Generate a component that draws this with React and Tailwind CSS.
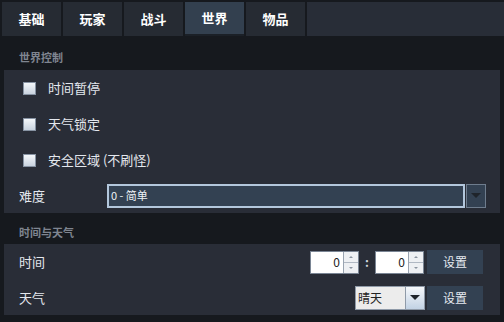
import { useState } from "react";

const tabs = ["基础", "玩家", "战斗", "世界", "物品"];

function Check({ label }) {
    const [on, setOn] = useState(false);
    return (
        <label className="h-9 flex items-center gap-3 pl-[19px] cursor-pointer">
            <span
                onClick={() => setOn(!on)}
                className="w-[13px] h-[13px] border border-[#8793a3] bg-linear-to-b from-[#f4f7fa] to-[#c9d3df] flex items-center justify-center text-[10px] leading-none text-[#222]"
            >
                {on ? "✓" : ""}
            </span>
            <span className="text-[13px] text-[#e4e8ee]">{label}</span>
        </label>
    );
}

function Spinner() {
    return (
        <div className="flex h-[23px] w-[49px] border border-[#7a8594] bg-white">
            <span className="flex-1 flex items-center justify-end pr-[3px] text-[12px] text-[#222]">0</span>
            <div className="w-[15px] flex flex-col border-l border-[#9aa4b1]">
                <span className="flex-1 flex items-center justify-center bg-[#eef0f3] border-b border-[#b0b8c3]">
                    <span className="w-0 h-0 border-x-[2px] border-x-transparent border-b-[2px] border-b-[#8a939f]"></span>
                </span>
                <span className="flex-1 flex items-center justify-center bg-[#eef0f3]">
                    <span className="w-0 h-0 border-x-[2px] border-x-transparent border-t-[2px] border-t-[#8a939f]"></span>
                </span>
            </div>
        </div>
    );
}

export default function App() {
    const [tab, setTab] = useState("世界");

    return (
        <div className="w-[504px] h-[322px] bg-[#16191e] overflow-hidden font-['Noto_Sans_CJK_SC','Noto_Sans',sans-serif]">
            {/* tab bar */}
            <div className="flex h-9 pt-0.5 pl-0.5 gap-0.5">
                {tabs.map((t) => (
                    <button
                        key={t}
                        onClick={() => setTab(t)}
                        className={`w-[59px] flex items-center justify-center text-[13px] font-bold text-white ${tab === t ? "bg-[#33404f] border-b-2 border-[#1b2027]" : "bg-[#262b33]"}`}
                    >
                        {t}
                    </button>
                ))}
                <div className="flex-1 bg-[#282d37]"></div>
            </div>

            {/* world control */}
            <div className="h-[34px] flex items-end pb-[5px] pl-[19px] text-[11px] leading-4 font-bold text-[#7f8590]">世界控制</div>
            <div className="mx-1 bg-[#292d37]">
                <Check label="时间暂停" />
                <Check label="天气锁定" />
                <Check label="安全区域 (不刷怪)" />
                <div className="h-[35px] flex items-center pl-[15px]">
                    <span className="w-[88px] text-[13px] text-[#e4e8ee]">难度</span>
                    <div className="w-[358px] h-6 border-2 border-[#b3c7dc] bg-[#334152] flex items-center pl-[2px] text-[11px] text-[#eef2f6]">0 - 简单</div>
                    <div className="w-[20px] h-6 ml-px border border-[#6e7c8d] bg-[#334152] flex items-center justify-center">
                        <span className="w-0 h-0 border-x-[5px] border-x-transparent border-t-[5px] border-t-[#1f242b]"></span>
                    </div>
                </div>
            </div>

            {/* time and weather */}
            <div className="h-[31px] flex items-end pb-1 pl-[19px] text-[11px] leading-4 font-bold text-[#7f8590]">时间与天气</div>
            <div className="mx-1 bg-[#292d37] pl-[15px] pr-[17px]">
                <div className="h-9 flex items-center">
                    <span className="flex-1 text-[13px] text-[#e4e8ee]">时间</span>
                    <Spinner />
                    <span className="w-4 text-center text-[12px] font-bold text-[#d0d6de]">:</span>
                    <Spinner />
                    <button className="ml-[3px] w-14 h-6 bg-[#334152] text-[12px] text-[#e6eaf0]">设置</button>
                </div>
                <div className="h-[35px] flex items-center">
                    <span className="flex-1 text-[13px] text-[#e4e8ee]">天气</span>
                    <div className="flex h-6 w-[70px] border border-[#8f9aa8]">
                        <span className="flex-1 bg-[#ececec] flex items-center pl-[2px] text-[12px] text-[#222]">晴天</span>
                        <span className="w-[19px] border-l border-[#8f9aa8] bg-linear-to-b from-[#f6f8fb] to-[#c2d2e4] flex items-center justify-center">
                            <span className="w-0 h-0 border-x-[5px] border-x-transparent border-t-[5px] border-t-[#1f242b]"></span>
                        </span>
                    </div>
                    <button className="ml-0.5 w-14 h-6 bg-[#334152] text-[12px] text-[#e6eaf0]">设置</button>
                </div>
            </div>
        </div>
    );
}
